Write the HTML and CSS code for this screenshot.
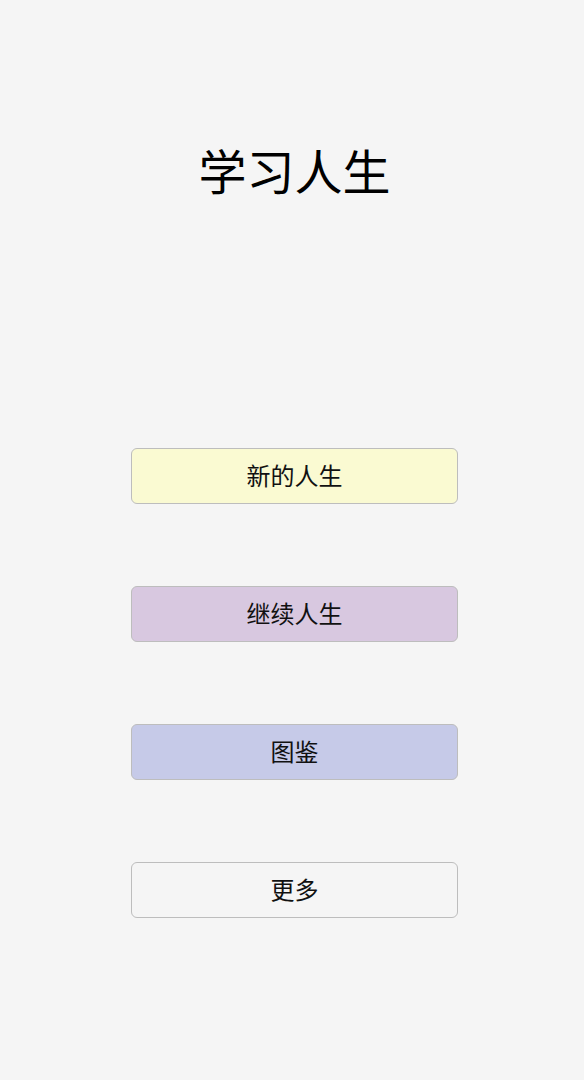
FILE: index.html
```html
<!DOCTYPE html>
<html lang="zh">
<head>
  <meta charset="UTF-8">
  <title>学习人生</title>
  <meta name="viewport" content="width=device-width, initial-scale=1.0">
  <link rel="stylesheet" href="styles.css">
</head>
<body>
  <div id="home">
    <h1 class="title">学习人生</h1>
    <!-- Main menu -->
    <div class="menu">
      <button class="menu-btn btn-new">新的人生</button>
      <button class="menu-btn btn-continue">继续人生</button>
      <button class="menu-btn btn-gallery">图鉴</button>
      <button class="menu-btn btn-more">更多</button>
    </div>
  </div>
</body>
</html>
```

FILE: styles.css
```css
html, body {
  margin: 0;
  padding: 0;
  background: #f5f5f5;
  height: 100%;
  font-family: "Noto Sans CJK SC", "Noto Sans", sans-serif;
  color: #111;
}
#home {
  display: flex;
  flex-direction: column;
  align-items: center;
  padding-left: 5px;
}
.title {
  margin: 139px 0 0 0;
  font-size: 48px;
  line-height: 60px;
  font-weight: normal;
  color: #000;
}
.menu {
  display: flex;
  flex-direction: column;
  gap: 82px;
  margin-top: 249px;
}
.menu-btn {
  width: 327px;
  height: 56px;
  border: 1.5px solid #bdbdbd;
  border-radius: 6px;
  font-family: inherit;
  font-size: 24px;
  color: #111;
  cursor: pointer;
  padding: 0 0 4px 0;
}
.btn-new {
  background: #fafad2;
}
.btn-continue {
  background: #d8c8e0;
}
.btn-gallery {
  background: #c6cae8;
}
.btn-more {
  background: #f5f5f5;
}
```
